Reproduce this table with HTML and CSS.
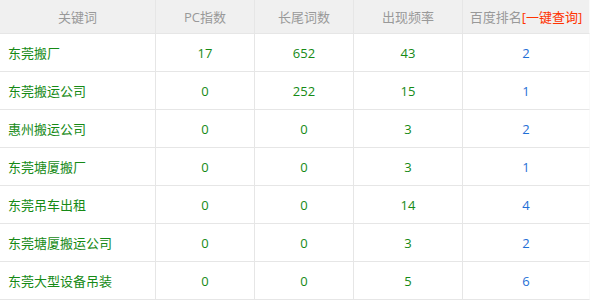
FILE: index.html
```html
<!DOCTYPE html>
<html lang="zh-CN">
<head>
<meta charset="utf-8">
<title>关键词排名</title>
<link rel="stylesheet" href="styles.css">
</head>
<body>
<table class="kw-table">
  <colgroup>
    <col class="c1"><col class="c2"><col class="c3"><col class="c4"><col class="c5">
  </colgroup>
  <thead>
    <tr>
      <th>关键词</th>
      <th>PC指数</th>
      <th>长尾词数</th>
      <th>出现频率</th>
      <th>百度排名<a class="query" href="#">[一键查询]</a></th>
    </tr>
  </thead>
  <tbody>
    <tr><td class="kw">东莞搬厂</td><td>17</td><td>652</td><td>43</td><td class="rank">2</td></tr>
    <tr><td class="kw">东莞搬运公司</td><td>0</td><td>252</td><td>15</td><td class="rank">1</td></tr>
    <tr><td class="kw">惠州搬运公司</td><td>0</td><td>0</td><td>3</td><td class="rank">2</td></tr>
    <tr><td class="kw">东莞塘厦搬厂</td><td>0</td><td>0</td><td>3</td><td class="rank">1</td></tr>
    <tr><td class="kw">东莞吊车出租</td><td>0</td><td>0</td><td>14</td><td class="rank">4</td></tr>
    <tr><td class="kw">东莞塘厦搬运公司</td><td>0</td><td>0</td><td>3</td><td class="rank">2</td></tr>
    <tr><td class="kw">东莞大型设备吊装</td><td>0</td><td>0</td><td>5</td><td class="rank">6</td></tr>
  </tbody>
</table>
</body>
</html>
```
FILE: styles.css
```css
html, body {
  margin: 0;
  padding: 0;
  background: #fff;
}
body {
  font-family: "Open Sans", "Noto Sans CJK SC", sans-serif;
  font-size: 13px;
}
.kw-table {
  width: 590px;
  table-layout: fixed;
  border-collapse: separate;
  border-spacing: 0;
}
.c1 { width: 156px; }
.c2 { width: 99px; }
.c3 { width: 99px; }
.c4 { width: 109px; }
.c5 { width: 127px; }
.kw-table th,
.kw-table td {
  padding: 0;
  text-align: center;
  border-right: 1px solid #e6e6e6;
  border-bottom: 1px solid #e6e6e6;
  white-space: nowrap;
  overflow: hidden;
}
.kw-table th:last-child,
.kw-table td:last-child {
  border-right: 1px solid #fafafa;
}
.kw-table th {
  height: 33px;
  background: #f0f0f0;
  color: #999;
  font-weight: normal;
}
.kw-table td {
  height: 37px;
  color: #168a16;
}
.kw-table td.kw {
  text-align: left;
  padding-left: 8px;
}
.kw-table td.rank {
  color: #1f6fd6;
}
.query {
  color: #ff3300;
  text-decoration: none;
}
```
